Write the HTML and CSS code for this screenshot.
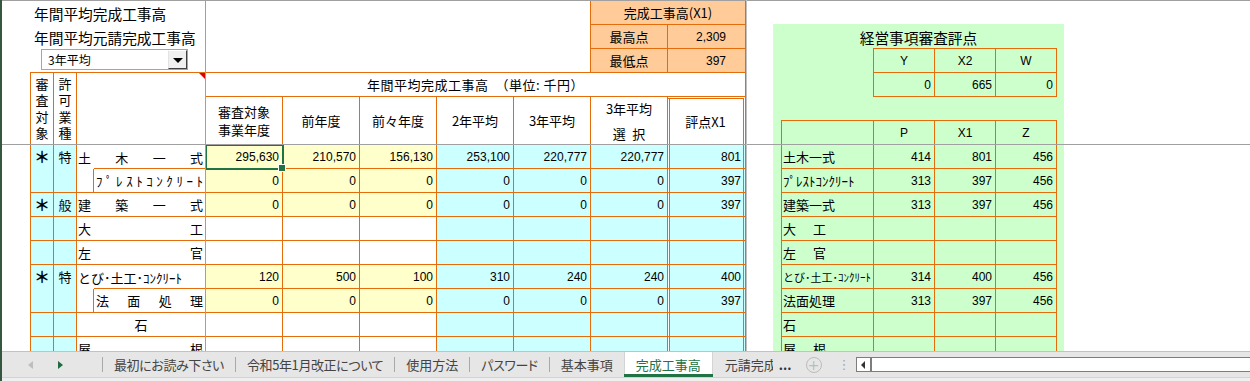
FILE: index.html
```html
<!DOCTYPE html>
<html lang="ja">
<head>
<meta charset="utf-8">
<title>完成工事高</title>
<link rel="stylesheet" href="styles.css">
</head>
<body>
<div class="app">
  <div class="sheet">
    <div class="grid">
      <div class="ttl c2_6 r0">年間平均完成工事高</div>
      <div class="ttl c2_6 r1">年間平均元請完成工事高</div>

      <div class="pk o blm c1112 r0 ctr">完成工事高(X1)</div>
      <div class="pk o blm c11 r1 ctr">最高点</div>
      <div class="pk o c12 r1 n pkn">2,309</div>
      <div class="pk o blm c11 r2 ctr">最低点</div>
      <div class="pk o c12 r2 n pkn">397</div>

      <div class="gbg"></div>
      <div class="gtitle">経営事項審査評点</div>
      <div class="o bt blm c16 r2 ctr lat">Y</div>
      <div class="o bt c17 r2 ctr lat">X2</div>
      <div class="o bt c18 r2 ctr lat">W</div>
      <div class="o blm c16 r3 n">0</div>
      <div class="o c17 r3 n">665</div>
      <div class="o c18 r3 n">0</div>
      <div class="o bt bl c15 r5"></div>
      <div class="o bt c16 r5 ctr lat">P</div>
      <div class="o bt c17 r5 ctr lat">X1</div>
      <div class="o bt c18 r5 ctr lat">Z</div>

      <div class="o bl c15 r6 gn">土木一式</div>
      <div class="o c16 r6 n">414</div><div class="o c17 r6 n">801</div><div class="o c18 r6 n">456</div>
      <div class="o bl c15 r7 gn">ﾌﾟﾚｽﾄｺﾝｸﾘｰﾄ</div>
      <div class="o c16 r7 n">313</div><div class="o c17 r7 n">397</div><div class="o c18 r7 n">456</div>
      <div class="o bl c15 r8 gn">建築一式</div>
      <div class="o c16 r8 n">313</div><div class="o c17 r8 n">397</div><div class="o c18 r8 n">456</div>
      <div class="o bl c15 r9 gn gsp">大　工</div>
      <div class="o c16 r9"></div><div class="o c17 r9"></div><div class="o c18 r9"></div>
      <div class="o bl c15 r10 gn gsp">左　官</div>
      <div class="o c16 r10"></div><div class="o c17 r10"></div><div class="o c18 r10"></div>
      <div class="o bl c15 r11 gn gsm">とび･土工･ｺﾝｸﾘｰﾄ</div>
      <div class="o c16 r11 n">314</div><div class="o c17 r11 n">400</div><div class="o c18 r11 n">456</div>
      <div class="o bl c15 r12 gn">法面処理</div>
      <div class="o c16 r12 n">313</div><div class="o c17 r12 n">397</div><div class="o c18 r12 n">456</div>
      <div class="o bl c15 r13 gn">石</div>
      <div class="o c16 r13"></div><div class="o c17 r13"></div><div class="o c18 r13"></div>
      <div class="o bl c15 r14 gn gsp">屋　根</div>
      <div class="o c16 r14"></div><div class="o c17 r14"></div><div class="o c18 r14"></div>

      <div class="o bt bl c2 r3 s3 vt"><span>審<br>査<br>対<br>象</span></div>
      <div class="o bt c3 r3 s3 vt"><span>許<br>可<br>業<br>種</span></div>
      <div class="o bt c45 r3 s3 cmt"></div>
      <div class="o bt c612 r3 ctr wide">年間平均完成工事高　（単位: 千円）</div>
      <div class="o c6 r4 s2 ctr hd"><span>審査対象<br>事業年度</span></div>
      <div class="o c7 r4 s2 ctr">前年度</div>
      <div class="o c8 r4 s2 ctr">前々年度</div>
      <div class="o c9 r4 s2 ctr">2年平均</div>
      <div class="o c10 r4 s2 ctr">3年平均</div>
      <div class="o c11 r4 s2 ctr hd2"><span>3年平均<br>選&ensp;択</span></div>
      <div class="o c12 r4 s2 ctr dbl dbt">評点X1</div>

      <div class="o bl c2 r6 s2 cy top ast">＊</div>
      <div class="o c3 r6 s2 cy top">特</div>
      <div class="br c45 r6 nm"><span>土</span><span>木</span><span>一</span><span>式</span></div>
      <div class="o c6 r6 y n sel">295,630</div>
      <div class="o c7 r6 y n">210,570</div>
      <div class="o c8 r6 y n">156,130</div>
      <div class="o c9 r6 cy n">253,100</div>
      <div class="o c10 r6 cy n">220,777</div>
      <div class="o c11 r6 cy n">220,777</div>
      <div class="o c12 r6 cy n dbl">801</div>

      <div class="o c4 r7"></div>
      <div class="o bt c5 r7 nm sub"><span>ﾌ</span><span>ﾟ</span><span>ﾚ</span><span>ｽ</span><span>ﾄ</span><span>ｺ</span><span>ﾝ</span><span>ｸ</span><span>ﾘ</span><span>ｰ</span><span>ﾄ</span></div>
      <div class="o c6 r7 y n">0</div>
      <div class="o c7 r7 y n">0</div>
      <div class="o c8 r7 y n">0</div>
      <div class="o c9 r7 cy n">0</div>
      <div class="o c10 r7 cy n">0</div>
      <div class="o c11 r7 cy n">0</div>
      <div class="o c12 r7 cy n dbl">397</div>

      <div class="o bl c2 r8 cy top ast">＊</div>
      <div class="o c3 r8 cy top">般</div>
      <div class="o c45 r8 nm"><span>建</span><span>築</span><span>一</span><span>式</span></div>
      <div class="o c6 r8 y n">0</div>
      <div class="o c7 r8 y n">0</div>
      <div class="o c8 r8 y n">0</div>
      <div class="o c9 r8 cy n">0</div>
      <div class="o c10 r8 cy n">0</div>
      <div class="o c11 r8 cy n">0</div>
      <div class="o c12 r8 cy n dbl">397</div>

      <div class="o bl c2 r9 cy"></div>
      <div class="o c3 r9 cy"></div>
      <div class="o c45 r9 nm"><span>大</span><span>工</span></div>
      <div class="o c6 r9"></div>
      <div class="o c7 r9"></div>
      <div class="o c8 r9"></div>
      <div class="o c9 r9 cy"></div>
      <div class="o c10 r9 cy"></div>
      <div class="o c11 r9 cy"></div>
      <div class="o c12 r9 cy dbl"></div>

      <div class="o bl c2 r10 cy"></div>
      <div class="o c3 r10 cy"></div>
      <div class="o c45 r10 nm"><span>左</span><span>官</span></div>
      <div class="o c6 r10"></div>
      <div class="o c7 r10"></div>
      <div class="o c8 r10"></div>
      <div class="o c9 r10 cy"></div>
      <div class="o c10 r10 cy"></div>
      <div class="o c11 r10 cy"></div>
      <div class="o c12 r10 cy dbl"></div>

      <div class="o bl c2 r11 s2 cy top ast">＊</div>
      <div class="o c3 r11 s2 cy top">特</div>
      <div class="br c45 r11 nl">とび･土工･ｺﾝｸﾘｰﾄ</div>
      <div class="o c6 r11 y n">120</div>
      <div class="o c7 r11 y n">500</div>
      <div class="o c8 r11 y n">100</div>
      <div class="o c9 r11 cy n">310</div>
      <div class="o c10 r11 cy n">240</div>
      <div class="o c11 r11 cy n">240</div>
      <div class="o c12 r11 cy n dbl">400</div>

      <div class="o c4 r12"></div>
      <div class="o bt c5 r12 nm sub"><span>法</span><span>面</span><span>処</span><span>理</span></div>
      <div class="o c6 r12 y n">0</div>
      <div class="o c7 r12 y n">0</div>
      <div class="o c8 r12 y n">0</div>
      <div class="o c9 r12 cy n">0</div>
      <div class="o c10 r12 cy n">0</div>
      <div class="o c11 r12 cy n">0</div>
      <div class="o c12 r12 cy n dbl">397</div>

      <div class="o bl c2 r13 cy"></div>
      <div class="o c3 r13 cy"></div>
      <div class="o c45 r13 ctr">石</div>
      <div class="o c6 r13"></div>
      <div class="o c7 r13"></div>
      <div class="o c8 r13"></div>
      <div class="o c9 r13 cy"></div>
      <div class="o c10 r13 cy"></div>
      <div class="o c11 r13 cy"></div>
      <div class="o c12 r13 cy dbl"></div>

      <div class="o bl c2 r14 cy"></div>
      <div class="o c3 r14 cy"></div>
      <div class="o c45 r14 nm"><span>屋</span><span>根</span></div>
      <div class="o c6 r14"></div>
      <div class="o c7 r14"></div>
      <div class="o c8 r14"></div>
      <div class="o c9 r14 cy"></div>
      <div class="o c10 r14 cy"></div>
      <div class="o c11 r14 cy"></div>
      <div class="o c12 r14 cy dbl"></div>
    </div>

    <div class="dd">
      <span class="dd-text">3年平均</span>
      <span class="dd-btn"><span class="dd-tri"></span></span>
    </div>
    <div class="fz fz-top"></div>
    <div class="fz fz-mid"></div>
    <div class="fz fz-v"></div>
    <div class="fz fz-v2"></div>
  </div>

  <div class="tabbar">
    <div class="tabrow">
      <div class="nav"><span class="arr-l"></span><span class="arr-r"></span></div>
      <span class="sep"></span>
      <div class="tab tight">最初にお読み下さい</div>
      <span class="sep"></span>
      <div class="tab tight">令和5年1月改正について</div>
      <span class="sep"></span>
      <div class="tab">使用方法</div>
      <span class="sep"></span>
      <div class="tab tight">パスワード</div>
      <span class="sep"></span>
      <div class="tab">基本事項</div>
      <div class="tab active">完成工事高</div>
      <div class="tab clip"><span>元請完成工事高</span></div>
      <div class="more">...</div>
      <div class="add">+</div>
      <div class="vdots">⋮</div>
      <div class="hscroll"><span class="hs-btn"><span class="hs-tri"></span></span></div>
    </div>
    <div class="status"></div>
  </div>
</div>
</body>
</html>
```

FILE: styles.css
```css
* { box-sizing: border-box; margin: 0; padding: 0; }
html, body { width: 1250px; height: 381px; overflow: hidden; background: #fff; }
body {
  font-family: "Noto Sans CJK JP", "Noto Sans", sans-serif;
  font-size: 13px;
  color: #000;
}
.app { position: relative; display: flex; flex-direction: column; height: 381px; }
.app::before {
  content: ""; position: absolute; left: 0; top: 0; bottom: 0; width: 2px;
  background: #35573f; z-index: 10;
}

.sheet { position: relative; height: 351px; overflow: hidden; flex: none; }
.grid {
  display: grid;
  grid-template-columns: 30px 24px 23px 17px 112px 77px 77px 77px 77px 77px 77px 78px 27px 8px 93px 61px 61px 61px 7px 1fr;
  grid-template-rows: repeat(15, 24px);
  padding-top: 1px;
}
.grid > div { display: flex; align-items: center; min-width: 0; white-space: nowrap; }

/* placement */
.c2 { grid-column: 2; } .c3 { grid-column: 3; } .c4 { grid-column: 4; } .c5 { grid-column: 5; }
.c6 { grid-column: 6; } .c7 { grid-column: 7; } .c8 { grid-column: 8; } .c9 { grid-column: 9; }
.c10 { grid-column: 10; } .c11 { grid-column: 11; } .c12 { grid-column: 12; }
.c15 { grid-column: 15; } .c16 { grid-column: 16; } .c17 { grid-column: 17; } .c18 { grid-column: 18; }
.c45 { grid-column: 4 / 6; }
.c612 { grid-column: 6 / 13; }
.c1112 { grid-column: 11 / 13; }
.c2_6 { grid-column: 2 / 6; }
.r0 { grid-row-start: 1; } .r1 { grid-row-start: 2; } .r2 { grid-row-start: 3; } .r3 { grid-row-start: 4; }
.r4 { grid-row-start: 5; } .r5 { grid-row-start: 6; } .r6 { grid-row-start: 7; } .r7 { grid-row-start: 8; }
.r8 { grid-row-start: 9; } .r9 { grid-row-start: 10; } .r10 { grid-row-start: 11; } .r11 { grid-row-start: 12; }
.r12 { grid-row-start: 13; } .r13 { grid-row-start: 14; } .r14 { grid-row-start: 15; }
.s2 { grid-row-end: span 2; }
.s3 { grid-row-end: span 3; }

/* borders */
.o { border-right: 1px solid #e46c0a; border-bottom: 1px solid #e46c0a; }
.br { border-right: 1px solid #e46c0a; }
.bl { border-left: 1px solid #e46c0a; }
.bt { border-top: 1px solid #e46c0a; margin-top: -1px; }
.blm { border-left: 1px solid #e46c0a; margin-left: -1px; }
.dbl {
  border-right: 3px double #e46c0a;
  box-shadow: inset 1px 0 0 #fff, inset 2px 0 0 #e46c0a;
}
.dbt { border-top: 3px double #e46c0a; margin-top: -1px; }

/* fills */
.y { background: #ffffcc; }
.cy { background: #ccffff; }
.pk { background: #ffcc99; }

/* text */
.ctr { justify-content: center; text-align: center; }
.wide { letter-spacing: 0.5px; }
.n {
  justify-content: flex-end; padding-right: 3px;
  font-family: "Liberation Sans", Arial, sans-serif; font-size: 12px;
}
.n.dbl { padding-right: 2px; }
.pkn { padding-right: 19px; }
.lat { font-family: "Liberation Sans", Arial, sans-serif; font-size: 12px; }

.ttl { font-size: 14.7px; padding-left: 4px; padding-top: 1px; }

.vt { justify-content: center; }
.vt span { display: block; line-height: 16.3px; text-align: center; }
.hd span { display: block; line-height: 18px; }
.hd2 span { display: block; line-height: 25px; }

.top { justify-content: center; align-items: flex-start !important; line-height: 23px; }
.ast { font-weight: bold; font-size: 16px; }

.nm { justify-content: space-between; padding: 0 2px 0 1px; }
.nm.sub { padding-left: 2px; }
.nl { padding-left: 1px; }

.sel { position: relative; z-index: 3; overflow: visible; }
.sel::after {
  content: ""; position: absolute; left: -1px; top: -1px; right: -2px; bottom: -2px;
  border: 2px solid #217346;
}
.sel::before {
  content: ""; position: absolute; right: -4px; bottom: -4px; width: 6px; height: 6px;
  background: #217346; border: 1px solid #fff; z-index: 1;
}
.cmt { position: relative; }
.cmt::after {
  content: ""; position: absolute; top: 0; right: 0;
  border-top: 6px solid #e00000; border-left: 6px solid transparent;
}

/* green panel */
.gbg { grid-column: 14 / 20; grid-row: 2 / 16; margin-top: -1px; background: #ccffcc; }
.gtitle { grid-column: 14 / 20; grid-row: 2; justify-content: center; font-size: 14.7px; }
.gn { padding-left: 1px; }
.gsp { letter-spacing: 2px; }
.gsm { font-size: 11px; }

/* freeze lines & dropdown */
.fz { position: absolute; background: #a0a0a0; z-index: 5; }
.fz-top { left: 0; right: 0; top: 0; height: 1px; }
.fz-mid { left: 0; right: 0; top: 144px; height: 1px; }
.fz-v { left: 205px; top: 0; bottom: 0; width: 1px; }
.fz-v2 { left: 746px; top: 0; bottom: 0; width: 1px; background: #c0c0c0; }

.dd {
  position: absolute; left: 41px; top: 49px; width: 147px; height: 21px;
  border: 1px solid #a5a5a5; background: #fff; z-index: 6;
  display: flex; align-items: center;
}
.dd-text { font-size: 12px; padding-left: 6px; }
.dd-btn {
  margin-left: auto; width: 19px; height: 19px;
  background: #f0f0f0;
  border: 1px solid; border-color: #fff #404040 #404040 #e3e3e3;
  display: flex; align-items: center; justify-content: center;
}
.dd-tri { width: 0; height: 0; border-top: 5px solid #000; border-left: 5px solid transparent; border-right: 5px solid transparent; margin-top: 1px; }

/* tab bar */
.tabbar {
  height: 30px; flex: none; border-top: 1px solid #c2c2c2; background: #e6e6e6;
  display: flex; flex-direction: column; overflow: hidden;
}
.tabrow {
  height: 25px; display: flex; align-items: center;
  font-size: 13px; color: #444; font-feature-settings: "palt"; white-space: nowrap;
}
.status { flex: 1; border-top: 1px solid #d2d2d2; background: #efefef; }
.nav { width: 102px; height: 100%; display: flex; align-items: center; padding-left: 28px; gap: 25px; flex: none; }
.arr-l { width: 0; height: 0; border-right: 5px solid #bdbdbd; border-top: 4px solid transparent; border-bottom: 4px solid transparent; }
.arr-r { width: 0; height: 0; border-left: 5px solid #1d6b40; border-top: 4px solid transparent; border-bottom: 4px solid transparent; }
.sep { width: 1px; height: 15px; background: #a9a9a9; flex: none; }
.tab { height: 100%; display: flex; align-items: center; padding: 0 11px; flex: none; }
.tab.tight { letter-spacing: -0.4px; }
.tab.active {
  padding: 0 12px;
  background: #fff; color: #217346;
  box-shadow: inset 0 -3px 0 #217346, inset 1px 0 0 #d4d4d4, inset -1px 0 0 #d4d4d4;
}
.tab.clip { padding: 0 0 0 12px; }
.tab.clip span { display: block; width: 48px; overflow: hidden; }
.more { margin-left: 6px; font-weight: bold; color: #333; font-feature-settings: normal; }
.add {
  margin-left: 14px; width: 16px; height: 16px; border: 1px solid #bcbcbc; border-radius: 50%;
  color: #bcbcbc; display: flex; align-items: center; justify-content: center;
  font-family: "DejaVu Sans", sans-serif; font-size: 14px; line-height: 1; flex: none;
}
.vdots { margin-left: 16px; color: #a6a6a6; font-family: "DejaVu Sans", sans-serif; font-size: 13px; width: 6px; }
.hscroll {
  margin-left: 12px; width: 420px; height: 15px; flex: none;
  border: 1px solid #7d7d7d; border-right: none; background: #fff; display: flex;
}
.hs-btn { width: 15px; height: 100%; border-right: 2px solid #7d7d7d; display: flex; align-items: center; justify-content: center; }
.hs-tri { width: 0; height: 0; border-right: 4px solid #333; border-top: 4px solid transparent; border-bottom: 4px solid transparent; }
```
